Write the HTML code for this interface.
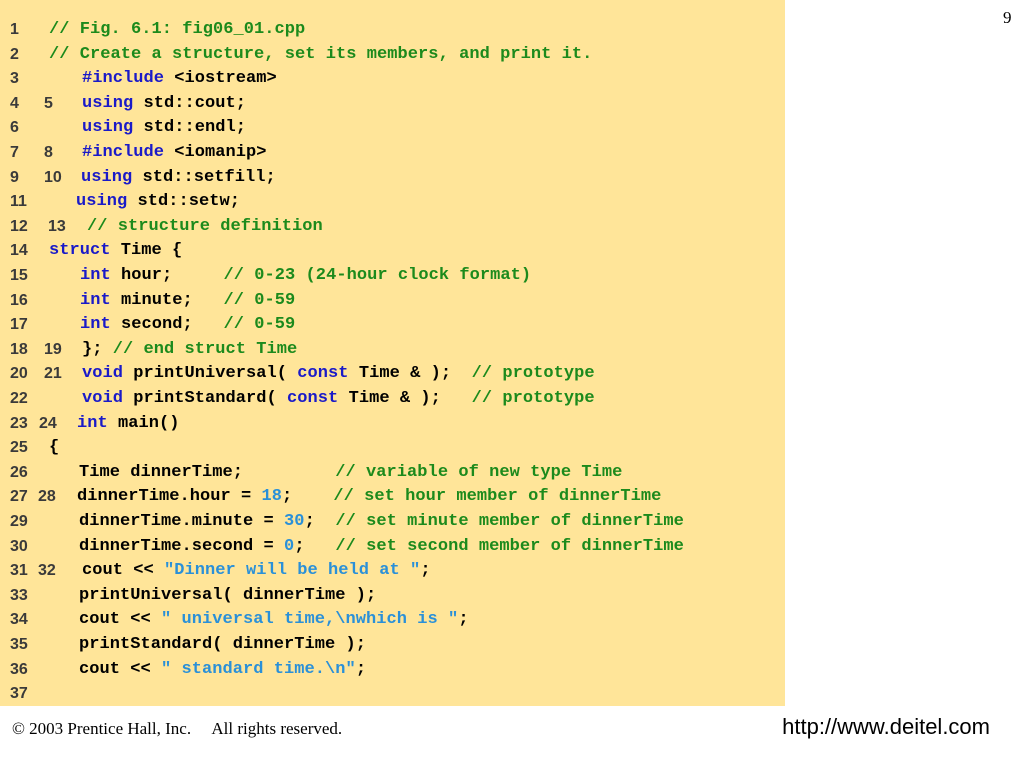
<!DOCTYPE html>
<html><head><meta charset="utf-8"><style>
html,body{margin:0;padding:0;width:1024px;height:768px;background:#fff;overflow:hidden;position:relative}
#box{position:absolute;left:0;top:0;width:785px;height:706px;background:#FFE599}
.n,.c{position:absolute;height:24px;line-height:24px;white-space:pre}
.n{font-family:"Liberation Sans",sans-serif;font-weight:bold;font-size:16px;color:#3a3a3a}
.c{font-family:"Liberation Mono",monospace;font-weight:bold;font-size:17px;letter-spacing:0.05px;color:#000}
.k{color:#1a1ac8}.g{color:#1c8a1c}.s{color:#2a90d8}
#pg{position:absolute;left:1003px;top:8px;font-family:"Liberation Serif",serif;font-size:17px}
#ft{position:absolute;left:12px;top:719px;font-family:"Liberation Serif",serif;font-size:17px;white-space:pre}
#url{position:absolute;right:34px;top:714px;font-family:"Liberation Sans",sans-serif;font-size:22px}
</style></head><body>
<div id="box"></div>
<div id="pg">9</div>
<div id="ft">© 2003 Prentice Hall, Inc.     All rights reserved.</div>
<div id="url">http://www.deitel.com</div>

<div class="n" style="left:10px;top:18px">1</div><div class="c g" style="left:49px;top:18px">// Fig. 6.1: fig06_01.cpp</div>
<div class="n" style="left:10px;top:43px">2</div><div class="c g" style="left:49px;top:43px">// Create a structure, set its members, and print it.</div>
<div class="n" style="left:10px;top:67px">3</div><div class="c" style="left:82px;top:67px"><span class="k">#include</span> &lt;iostream&gt;</div>
<div class="n" style="left:10px;top:92px">4</div><div class="n" style="left:44px;top:92px">5</div><div class="c" style="left:82px;top:92px"><span class="k">using</span> std::cout;</div>
<div class="n" style="left:10px;top:116px">6</div><div class="c" style="left:82px;top:116px"><span class="k">using</span> std::endl;</div>
<div class="n" style="left:10px;top:141px">7</div><div class="n" style="left:44px;top:141px">8</div><div class="c" style="left:82px;top:141px"><span class="k">#include</span> &lt;iomanip&gt;</div>
<div class="n" style="left:10px;top:166px">9</div><div class="n" style="left:44px;top:166px">10</div><div class="c" style="left:81px;top:166px"><span class="k">using</span> std::setfill;</div>
<div class="n" style="left:10px;top:190px">11</div><div class="c" style="left:76px;top:190px"><span class="k">using</span> std::setw;</div>
<div class="n" style="left:10px;top:215px">12</div><div class="n" style="left:48px;top:215px">13</div><div class="c g" style="left:87px;top:215px">// structure definition</div>
<div class="n" style="left:10px;top:239px">14</div><div class="c" style="left:49px;top:239px"><span class="k">struct</span> Time {</div>
<div class="n" style="left:10px;top:264px">15</div><div class="c" style="left:80px;top:264px"><span class="k">int</span> hour;     <span class="g">// 0-23 (24-hour clock format)</span></div>
<div class="n" style="left:10px;top:289px">16</div><div class="c" style="left:80px;top:289px"><span class="k">int</span> minute;   <span class="g">// 0-59</span></div>
<div class="n" style="left:10px;top:313px">17</div><div class="c" style="left:80px;top:313px"><span class="k">int</span> second;   <span class="g">// 0-59</span></div>
<div class="n" style="left:10px;top:338px">18</div><div class="n" style="left:44px;top:338px">19</div><div class="c" style="left:82px;top:338px">}; <span class="g">// end struct Time</span></div>
<div class="n" style="left:10px;top:362px">20</div><div class="n" style="left:44px;top:362px">21</div><div class="c" style="left:82px;top:362px"><span class="k">void</span> printUniversal( <span class="k">const</span> Time &amp; );  <span class="g">// prototype</span></div>
<div class="n" style="left:10px;top:387px">22</div><div class="c" style="left:82px;top:387px"><span class="k">void</span> printStandard( <span class="k">const</span> Time &amp; );   <span class="g">// prototype</span></div>
<div class="n" style="left:10px;top:412px">23</div><div class="n" style="left:39px;top:412px">24</div><div class="c" style="left:77px;top:412px"><span class="k">int</span> main()</div>
<div class="n" style="left:10px;top:436px">25</div><div class="c" style="left:49px;top:436px">{</div>
<div class="n" style="left:10px;top:461px">26</div><div class="c" style="left:79px;top:461px">Time dinnerTime;         <span class="g">// variable of new type Time</span></div>
<div class="n" style="left:10px;top:485px">27</div><div class="n" style="left:38px;top:485px">28</div><div class="c" style="left:77px;top:485px">dinnerTime.hour = <span class="s">18</span>;    <span class="g">// set hour member of dinnerTime</span></div>
<div class="n" style="left:10px;top:510px">29</div><div class="c" style="left:79px;top:510px">dinnerTime.minute = <span class="s">30</span>;  <span class="g">// set minute member of dinnerTime</span></div>
<div class="n" style="left:10px;top:535px">30</div><div class="c" style="left:79px;top:535px">dinnerTime.second = <span class="s">0</span>;   <span class="g">// set second member of dinnerTime</span></div>
<div class="n" style="left:10px;top:559px">31</div><div class="n" style="left:38px;top:559px">32</div><div class="c" style="left:82px;top:559px">cout &lt;&lt; <span class="s">"Dinner will be held at "</span>;</div>
<div class="n" style="left:10px;top:584px">33</div><div class="c" style="left:79px;top:584px">printUniversal( dinnerTime );</div>
<div class="n" style="left:10px;top:608px">34</div><div class="c" style="left:79px;top:608px">cout &lt;&lt; <span class="s">" universal time,\nwhich is "</span>;</div>
<div class="n" style="left:10px;top:633px">35</div><div class="c" style="left:79px;top:633px">printStandard( dinnerTime );</div>
<div class="n" style="left:10px;top:658px">36</div><div class="c" style="left:79px;top:658px">cout &lt;&lt; <span class="s">" standard time.\n"</span>;</div>
<div class="n" style="left:10px;top:682px">37</div>
</body></html>
